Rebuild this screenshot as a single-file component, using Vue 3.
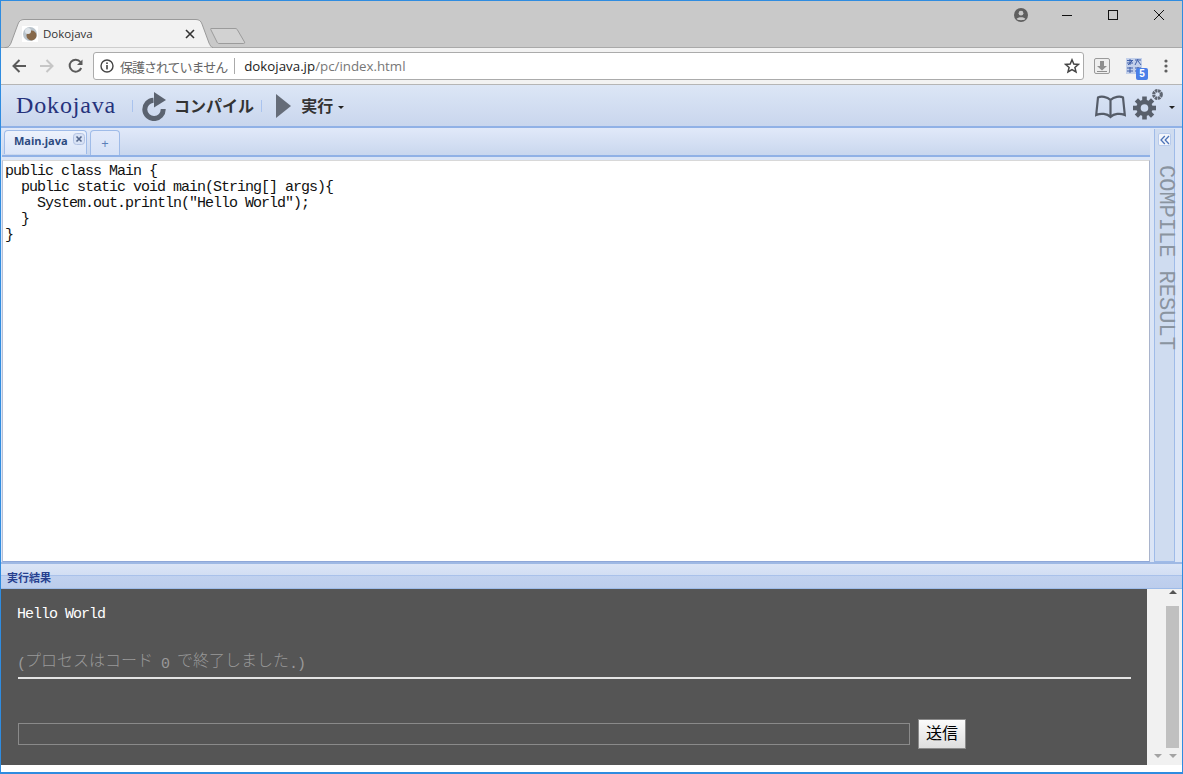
<script setup>
const codeLines = [
  'public class Main {',
  '  public static void main(String[] args){',
  '    System.out.println("Hello World");',
  '  }',
  '}'
]
</script>

<template>
  <div class="window">
    <div class="tabstrip">
      <div class="tab">
        <svg class="tab-shape" width="209" height="29" viewBox="0 0 209 29">
          <path d="M0.5 28.5 L2 28.5 C5 28.5 6 26 7 24 L14 5 C15 2 17 0.5 20 0.5 L192 0.5 C195 0.5 197 2 198 5 L205 24 C206 26 207 28.5 209 28.5" fill="#f2f2f2" stroke="#9a9a9a" />
        </svg>
        <svg class="favicon" width="16" height="16" viewBox="0 0 16 16">
          <rect width="16" height="16" fill="#fff" />
          <circle cx="8" cy="8" r="7" fill="#b9c3cb" />
          <circle cx="9.5" cy="9.5" r="5" fill="#86684a" />
          <circle cx="6" cy="5" r="3" fill="#dfe5ea" />
        </svg>
        <span class="tab-title">Dokojava</span>
        <svg class="tab-close" width="10" height="10" viewBox="0 0 10 10">
          <path d="M1 1 L9 9 M9 1 L1 9" stroke="#333" stroke-width="1.6" />
        </svg>
      </div>
      <svg class="newtab" width="36" height="18" viewBox="0 0 36 18">
        <path d="M1 1.5 L25 1.5 C26.5 1.5 27 2 27.5 3 L34.5 15 C35 16.5 34 16.5 33 16.5 L9 16.5 C8 16.5 7.5 16 7 15 L1 3 C0.5 2 0.5 1.5 1 1.5 Z" fill="#d2d2d2" stroke="#9b9b9b" />
      </svg>
      <div class="winctl">
        <svg class="ctl-user" width="14" height="14" viewBox="0 0 14 14">
          <circle cx="7" cy="7" r="7" fill="#5f5f5f" />
          <circle cx="7" cy="5.2" r="2.4" fill="#c8c8c8" />
          <path d="M2.6 11 C3.6 8.8 10.4 8.8 11.4 11 C10 12.6 4 12.6 2.6 11 Z" fill="#c8c8c8" />
        </svg>
        <svg class="ctl" width="46" height="14" viewBox="0 0 46 14">
          <path d="M18 7.5 H28" stroke="#111" />
        </svg>
        <svg class="ctl" width="46" height="14" viewBox="0 0 46 14">
          <rect x="18.5" y="2.5" width="9" height="9" fill="none" stroke="#111" />
        </svg>
        <svg class="ctl" width="46" height="14" viewBox="0 0 46 14">
          <path d="M18 2 L28 12 M28 2 L18 12" stroke="#111" />
        </svg>
      </div>
    </div>

    <div class="toolbar">
      <svg class="nav nav-a" width="16" height="16" viewBox="0 0 16 16">
        <path d="M15 8 H3 M8.5 2 L2.5 8 L8.5 14" fill="none" stroke="#5a5a5a" stroke-width="2" />
      </svg>
      <svg class="nav nav-b" width="16" height="16" viewBox="0 0 16 16">
        <path d="M1 8 H13 M7.5 2 L13.5 8 L7.5 14" fill="none" stroke="#c6c6c6" stroke-width="2" />
      </svg>
      <svg class="nav" width="16" height="16" viewBox="0 0 16 16">
        <path d="M13.2 10 A6 6 0 1 1 12.4 4" fill="none" stroke="#5a5a5a" stroke-width="2" />
        <path d="M14.5 1.5 V7 H9 Z" fill="#5a5a5a" />
      </svg>
      <div class="omnibox">
        <svg class="info" width="14" height="14" viewBox="0 0 14 14">
          <circle cx="7" cy="7" r="6" fill="none" stroke="#444" stroke-width="1.4" />
          <rect x="6.2" y="6" width="1.6" height="4.4" fill="#444" />
          <rect x="6.2" y="3.4" width="1.6" height="1.6" fill="#444" />
        </svg>
        <span class="notsecure">保護されていません</span>
        <span class="omni-sep"></span>
        <span class="url"><span class="host">dokojava.jp</span>/pc/index.html</span>
        <svg class="star" width="16" height="16" viewBox="0 0 16 16">
          <path d="M8 1.8 L9.8 6 L14.4 6.4 L10.9 9.4 L12 13.9 L8 11.5 L4 13.9 L5.1 9.4 L1.6 6.4 L6.2 6 Z" fill="none" stroke="#444" stroke-width="1.5" />
        </svg>
      </div>
      <svg class="ext-dl" width="16" height="16" viewBox="0 0 16 16">
        <rect x="0.5" y="0.5" width="15" height="15" rx="1.5" fill="#eee" stroke="#9a9a9a" />
        <rect x="6" y="3" width="4" height="5" fill="#8e8e8e" />
        <path d="M3 8 H13 L8 12.5 Z" fill="#8e8e8e" />
        <path d="M3 13.5 H13" stroke="#8e8e8e" />
      </svg>
      <div class="ext-tr">
        <svg class="ext-grid" width="16" height="16" viewBox="0 0 16 16">
          <rect width="16" height="16" fill="#c3d0ea" />
          <path d="M1 2.5 H7 M1 5 H7 M4 1 V7 M2 7 L6 3 M9 2 H15 M12 1 L9 7 M12 3 L15 7 M1 10 H7 M1 13 H7 M4 9 V15 M9 10 H15 M9 13 H15 M12 9 V15" stroke="#3f5fa8" stroke-width="1" fill="none" />
        </svg>
        <span class="ext-badge">5</span>
      </div>
      <svg class="menu" width="4" height="14" viewBox="0 0 4 14">
        <circle cx="2" cy="2" r="1.6" fill="#5f5f5f" />
        <circle cx="2" cy="7" r="1.6" fill="#5f5f5f" />
        <circle cx="2" cy="12" r="1.6" fill="#5f5f5f" />
      </svg>
    </div>

    <div class="apphead">
      <span class="brand">Dokojava</span>
      <span class="sep"></span>
      <svg class="ic-compile" width="26" height="30" viewBox="0 0 26 30">
        <path d="M21.2 18 A9.2 9.2 0 1 1 11.5 9.2" fill="none" stroke="#5b6370" stroke-width="5" />
        <path d="M12 1 L24 9 L12 16.5 Z" fill="#5b6370" />
      </svg>
      <span class="cmd cmd-compile">コンパイル</span>
      <span class="sep sep2"></span>
      <svg class="ic-run" width="16" height="24" viewBox="0 0 16 24">
        <path d="M0 0 L15 12 L0 24 Z" fill="#656c78" />
      </svg>
      <span class="cmd cmd-run">実行</span>
      <span class="caret"></span>
      <span class="spring"></span>
      <svg class="ic-book" width="31" height="24" viewBox="0 0 31 24">
        <path d="M15.5 5 C12 1.5 6 1 3 2.5 L1.2 20 C6 18 12 18.5 15.5 22 C19 18.5 25 18 29.8 20 L28 2.5 C25 1 19 1.5 15.5 5 Z M15.5 5 V22" fill="none" stroke="#555c68" stroke-width="2.2" />
      </svg>
      <svg class="ic-gear" width="32" height="32" viewBox="0 0 32 32">
        <g fill="#585f6b">
          <circle cx="11.5" cy="20" r="8.2" />
          <g stroke="#585f6b" stroke-width="4.6">
            <path d="M11.5 8.5 V31.5" />
            <path d="M0 20 H23" />
            <path d="M3.4 11.9 L19.6 28.1" />
            <path d="M19.6 11.9 L3.4 28.1" />
          </g>
        </g>
        <circle cx="11.5" cy="20" r="3.8" fill="#cfdbef" />
        <circle cx="24.5" cy="6.5" r="3.8" fill="none" stroke="#5f6672" stroke-width="3.2" stroke-dasharray="2.4 0.6" />
      </svg>
      <span class="caret caret-gear"></span>
    </div>

    <div class="workspace">
      <div class="editor-col">
        <div class="tabbar">
          <div class="ftab ftab-on">
            <span>Main.java</span>
            <svg class="ftab-x" width="12" height="12" viewBox="0 0 12 12">
              <rect x="0.5" y="0.5" width="11" height="11" rx="3" fill="#d8e2f5" stroke="#b3c3e3" />
              <path d="M3.5 3.5 L8.5 8.5 M8.5 3.5 L3.5 8.5" stroke="#54678c" stroke-width="1.6" />
            </svg>
          </div>
          <div class="ftab ftab-add">+</div>
        </div>
        <pre class="editor"><code v-for="line in codeLines" :key="line" class="code-line">{{ line }}</code></pre>
      </div>
      <div class="sidepanel">
        <span class="collapse">
          <svg width="10" height="10" viewBox="0 0 10 10">
            <path d="M4.8 1 L1 5 L4.8 9 M9 1 L5.2 5 L9 9" fill="none" stroke="#4d74b8" stroke-width="1.3" />
          </svg>
        </span>
        <span class="vtext">COMPILE RESULT</span>
      </div>
    </div>

    <div class="resulthead"><span>実行結果</span></div>

    <div class="result">
      <div class="console">
        <div class="out-hello">Hello World</div>
        <div class="out-exit">(<span class="jp">プロセスはコード</span> 0 <span class="jp">で終了しました</span>.)</div>
        <div class="rule"></div>
        <div class="inputrow">
          <div class="stdin"></div>
          <div class="send">送信</div>
        </div>
      </div>
      <div class="scrollbars">
        <div class="sb-left">
          <span class="arrow-down"></span>
        </div>
        <div class="sb-right">
          <span class="arrow-up"></span>
          <span class="thumb"></span>
          <span class="arrow-down"></span>
        </div>
      </div>
    </div>
  </div>
</template>

<style>
html, body { margin: 0; background: #fff; }
</style>

<style scoped>
.window {
  width: 1183px;
  height: 774px;
  box-sizing: border-box;
  border: 1px solid #2f8ce0;
  border-bottom-width: 2px;
  display: flex;
  flex-direction: column;
  overflow: hidden;
  background: #fff;
  font-family: "Noto Sans CJK JP", sans-serif;
}
.tabstrip {
  height: 47px;
  flex: none;
  background: #c9c9c9;
  display: flex;
  align-items: flex-end;
  border-bottom: 1px solid #a9a9a9;
  box-sizing: border-box;
  position: relative;
}
.tab {
  position: relative;
  width: 209px;
  height: 29px;
  margin-left: 3px;
  margin-bottom: -1px;
  display: flex;
  align-items: center;
  flex: none;
}
.tab-shape { position: absolute; left: 0; top: 0; }
.favicon { position: relative; margin-left: 18px; }
.tab-title {
  position: relative;
  margin-left: 5px;
  font: 11.5px "Open Sans", sans-serif;
  color: #333;
}
.tab-close { position: absolute; left: 181px; top: 10px; }
.newtab { flex: none; margin-left: -3px; margin-bottom: 2px; }
.winctl {
  margin-left: auto;
  align-self: flex-start;
  margin-top: 7px;
  display: flex;
  align-items: center;
}
.ctl-user { margin-right: 16px; }
.ctl { display: block; }

.toolbar {
  height: 37px;
  flex: none;
  background: #f2f2f2;
  display: flex;
  align-items: center;
  box-sizing: border-box;
  border-bottom: 1px solid #b5b5b5;
  padding-left: 10px;
}
.nav { flex: none; margin-right: 11px; }
.nav-a { margin-right: 12px; }
.nav-b { margin-right: 13px; }
.omnibox {
  width: 991px;
  height: 28px;
  box-sizing: border-box;
  margin-left: -2px;
  flex: none;
  background: #fff;
  border: 1px solid #ababab;
  border-radius: 3px;
  display: flex;
  align-items: center;
  padding-left: 6px;
}
.info { flex: none; }
.notsecure {
  margin-left: 6px;
  font-size: 13px;
  letter-spacing: -1px;
  color: #666;
}
.omni-sep {
  width: 1px;
  height: 16px;
  background: #aaa;
  margin-left: 7px;
}
.url {
  margin-left: 9px;
  font: 13.3px "Open Sans", sans-serif;
  color: #777;
}
.host { color: #222; }
.star { margin-left: auto; margin-right: 3px; }
.ext-dl { flex: none; margin-left: 10px; }
.ext-tr {
  position: relative;
  width: 22px;
  height: 22px;
  margin-left: 16px;
  flex: none;
}
.ext-grid { display: block; margin-top: 3px; }
.ext-badge {
  position: absolute;
  left: 10px;
  top: 13px;
  width: 12px;
  height: 12px;
  border-radius: 2px;
  background: #4a7fe8;
  color: #fff;
  font: bold 10px/12px "Liberation Sans", sans-serif;
  text-align: center;
}
.menu { margin-left: 16px; flex: none; }

.apphead {
  height: 43px;
  flex: none;
  box-sizing: border-box;
  background: linear-gradient(#dce6f6, #c9d6ed);
  border-bottom: 2px solid #90b1e6;
  display: flex;
  align-items: center;
  padding-left: 15px;
}
.brand {
  font: 24px "Liberation Serif", serif;
  color: #26337c;
  letter-spacing: 0.85px;
}
.sep {
  width: 1px;
  height: 12px;
  background: #a9c3ee;
  margin-left: 16px;
}
.ic-compile { margin-left: 9px; flex: none; }
.cmd {
  font-size: 16px;
  font-weight: 700;
  color: #333;
  margin-top: -2px;
}
.cmd-compile { margin-left: 6px; }
.sep2 { margin-left: 7px; }
.ic-run { margin-left: 14px; flex: none; }
.cmd-run { margin-left: 9px; }
.caret {
  width: 0;
  height: 0;
  border-left: 3px solid transparent;
  border-right: 3px solid transparent;
  border-top: 3px solid #222;
  margin-left: 5px;
  margin-top: 3px;
}
.spring { flex: 1; }
.ic-book { flex: none; margin-top: 2px; margin-left: -1px; }
.ic-gear { flex: none; margin-left: 7px; margin-top: -4px; }
.caret-gear { margin-left: 4px; margin-right: 7px; }

.workspace {
  flex: 1;
  min-height: 0;
  display: flex;
  background: #dbe5f6;
  border-bottom: 2px solid #9fb9e4;
}
.editor-col {
  flex: 1;
  min-width: 0;
  display: flex;
  flex-direction: column;
  padding-left: 1px;
  border-right: 4px solid #dbe5f6;
}
.tabbar {
  height: 29px;
  flex: none;
  box-sizing: border-box;
  background: linear-gradient(#e1e9f9, #c9d7ee);
  border-bottom: 2px solid #90b1e6;
  display: flex;
  align-items: flex-end;
  padding-left: 2px;
  gap: 3px;
}
.ftab {
  box-sizing: border-box;
  border: 1px solid #9fbbe8;
  border-bottom: none;
  border-radius: 4px 4px 0 0;
  font-family: "Open Sans", sans-serif;
}
.ftab-on {
  width: 83px;
  height: 24px;
  margin-bottom: 1px;
  position: relative;
  background: linear-gradient(#edf2fc, #dbe5f8);
  font-size: 11px;
  font-weight: 700;
  color: #2c4a80;
  line-height: 20px;
  padding-left: 9px;
}
.ftab-x { position: absolute; right: 1px; top: 2px; }
.ftab-add {
  width: 30px;
  height: 25px;
  background: linear-gradient(#e3eafa, #d6e1f6);
  font-size: 13px;
  color: #5a7fb8;
  text-align: center;
  line-height: 25px;
}
.editor {
  flex: 1;
  min-height: 0;
  margin: 3px 0 0;
  box-sizing: border-box;
  background: #fff;
  border-left: 1px solid #b5bfd6;
  border-top: 1px solid #d8d8d8;
  border-right: 1px solid #a9b4cc;
  border-bottom: 1px solid #8fa8d8;
  padding: 3px 0 0 2px;
  font: 15px/16px "Liberation Mono", monospace;
  letter-spacing: -1px;
  color: #111;
}
.code-line { display: block; font: inherit; white-space: pre; }
.sidepanel {
  width: 21px;
  flex: none;
  box-sizing: border-box;
  margin-top: 1px;
  margin-right: 7px;
  background: #cfdcf0;
  border-left: 1px solid #9fbbe8;
  border-right: 1px solid #9fbbe8;
  border-bottom: 1px solid #9fbbe8;
  display: flex;
  flex-direction: column;
  align-items: center;
}
.collapse {
  margin-top: 4px;
  width: 13px;
  height: 13px;
  box-sizing: border-box;
  background: #f3f6fc;
  border: 1px solid #b8cbec;
  border-radius: 2px;
  display: flex;
  align-items: center;
  justify-content: center;
}
.vtext {
  margin-top: 19px;
  writing-mode: vertical-rl;
  font: 22px/20px "Liberation Mono", monospace;
  color: #8a94a0;
  white-space: pre;
}

.resulthead {
  height: 25px;
  flex: none;
  box-sizing: border-box;
  background: linear-gradient(#dbe5f6 0, #d2def3 46%, #a9c1ea 46%, #a9c1ea 50%, #c0d1ef 50%, #bccdec 100%);
  border-bottom: 1px solid #9dbbe8;
  padding-left: 6px;
  font-size: 11px;
  font-weight: 700;
  line-height: 27px;
  color: #27408f;
}
.result {
  height: 176px;
  flex: none;
  display: flex;
  background: #fff;
  margin-bottom: 7px;
}
.console {
  width: 1146px;
  flex: none;
  box-sizing: border-box;
  background: #555;
  padding: 18px 0 0 16px;
  font: 15px/16px "Liberation Mono", monospace;
  letter-spacing: -1px;
  color: #fff;
}
.out-hello { height: 46px; }
.out-exit { color: #999; height: 16px; white-space: pre; }
.jp {
  font-family: "Noto Sans CJK JP", sans-serif;
  font-size: 16px;
  line-height: 16px;
  font-weight: 300;
  letter-spacing: 0;
  position: relative;
  top: -2px;
}
.rule {
  width: 1113px;
  height: 2px;
  margin-top: 8px;
  margin-left: 1px;
  background: #e4e4e4;
}
.inputrow {
  display: flex;
  align-items: center;
  margin-top: 40px;
  margin-left: 1px;
}
.stdin {
  width: 892px;
  height: 22px;
  box-sizing: border-box;
  border: 1px solid #8a8a8a;
}
.send {
  width: 48px;
  height: 30px;
  box-sizing: border-box;
  margin-left: 8px;
  background: linear-gradient(#fbfbfb, #dedede);
  border: 1px solid #8a8a8a;
  color: #000;
  font: 16px/25px "Noto Sans CJK JP", sans-serif;
  letter-spacing: 0;
  text-align: center;
}
.scrollbars {
  flex: 1;
  background: #f1f1f1;
  display: flex;
  justify-content: flex-end;
  padding-right: 3px;
  gap: 2px;
}
.sb-left, .sb-right {
  display: flex;
  flex-direction: column;
  align-items: center;
  width: 13px;
}
.sb-left { justify-content: flex-end; padding-bottom: 7px; box-sizing: border-box; }
.sb-right { padding-bottom: 7px; box-sizing: border-box; }
.arrow-up {
  margin-top: 1px;
  width: 0; height: 0;
  border-left: 4px solid transparent;
  border-right: 4px solid transparent;
  border-bottom: 4px solid #555;
}
.arrow-down {
  width: 0; height: 0;
  border-left: 4px solid transparent;
  border-right: 4px solid transparent;
  border-top: 4px solid #a3a3a3;
}
.thumb {
  width: 13px;
  height: 142px;
  margin-top: 12px;
  margin-bottom: 6px;
  background: #c0c0c0;
}
</style>
